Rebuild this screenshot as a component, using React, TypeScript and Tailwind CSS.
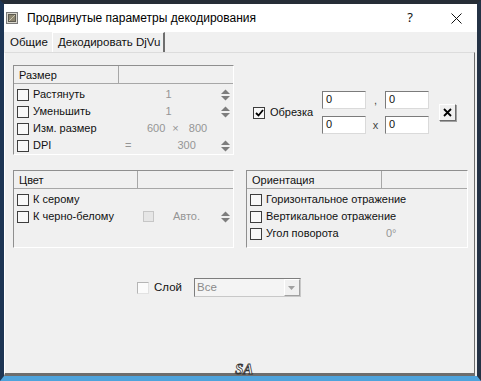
import React from "react";

function Check({ checked = false }: { checked?: boolean }) {
  return (
    <span className="flex items-center justify-center w-[12px] h-[12px] shrink-0 border border-[#3d3d3d] bg-[#f8f8f8]">
      {checked && (
        <svg width="9" height="8" viewBox="0 0 9 8">
          <path d="M1 4 L3.5 6.5 L8 1" stroke="#000" strokeWidth="1.8" fill="none" />
        </svg>
      )}
    </span>
  );
}

function Spin() {
  return (
    <svg width="9" height="12" viewBox="0 0 9 12" className="ml-auto mr-[3px] shrink-0">
      <path d="M0 5 L4.5 0.5 L9 5 Z" fill="#7d7d7d" />
      <path d="M0 7 L4.5 11.5 L9 7 Z" fill="#7d7d7d" />
    </svg>
  );
}

function Label({ cls, children }: { cls: string; children: React.ReactNode }) {
  return (
    <span className={"flex items-center pl-[3px] shrink-0 " + cls}>
      <Check />
      <span className="ml-[4px] whitespace-nowrap">{children}</span>
    </span>
  );
}

function Row({ children }: { children: React.ReactNode }) {
  return <div className="flex items-center h-[17px]">{children}</div>;
}

function Group({
  cls,
  headCls,
  title,
  children,
}: {
  cls: string;
  headCls: string;
  title: string;
  children: React.ReactNode;
}) {
  return (
    <div className={"flex flex-col shrink-0 border border-t-[#8f8f8f] border-l-[#8f8f8f] border-r-white border-b-white " + cls}>
      <div className="flex h-[18px] border-b border-[#a7a7a7] bg-[#f0f0f0]">
        <div className={"pl-[5px] pt-[1px] flex items-center border-r border-[#a7a7a7] shrink-0 " + headCls}>{title}</div>
        <div className="flex-1" />
      </div>
      <div className="pt-[2px] flex flex-col">{children}</div>
    </div>
  );
}

function Field() {
  return (
    <div className="w-[44px] h-[18px] bg-white border border-t-[#7b7b7b] border-l-[#7b7b7b] border-r-[#dadada] border-b-[#dadada] pl-[3px] leading-[15px]">
      0
    </div>
  );
}

export default function App() {
  return (
    <div className="relative w-[481px] h-[381px] overflow-hidden flex flex-col border-t-[4px] border-l-[4px] border-r-[4px] border-b-[5px] border-t-[#262d36] border-l-[#1d3554] border-r-[#243245] border-b-[#4ea3dc] bg-[#f0f0f0] [font-family:'Liberation_Sans',Arial,sans-serif] text-[11px] text-[#111]">
      {/* title bar */}
      <div className="h-[28px] bg-white flex items-center shrink-0">
        <svg width="12" height="12" viewBox="0 0 12 12" className="ml-[2px] shrink-0">
          <rect x="0.5" y="0.5" width="11" height="11" fill="#d9d6cc" stroke="#7a7a7a" />
          <rect x="2.5" y="2.5" width="7" height="7" fill="#8d8670" stroke="#5d5a50" />
          <path d="M3 9 L9 3" stroke="#c9c3ad" strokeWidth="1" />
        </svg>
        <span className="ml-[9px] text-[12px] whitespace-nowrap text-black">
          Продвинутые параметры декодирования
        </span>
        <span className="ml-auto text-[13px] [font-family:'Noto_Sans',sans-serif]">?</span>
        <svg width="11" height="11" viewBox="0 0 11 11" className="ml-[38px] mr-[15px] shrink-0">
          <path d="M0.5 0.5 L10.5 10.5 M10.5 0.5 L0.5 10.5" stroke="#111" strokeWidth="1" />
        </svg>
      </div>

      {/* tabs */}
      <div className="h-[20px] flex items-end shrink-0">
        <div className="ml-[1px] w-[47px] h-[18px] pl-[5px] flex items-center text-[11.5px] whitespace-nowrap">Общие</div>
        <div className="w-[113px] h-[20px] pl-[5px] flex items-center border-t border-l border-r-[2px] border-t-white border-l-white border-r-[#6e6e6e] text-[11.5px] whitespace-nowrap">
          Декодировать DjVu
        </div>
      </div>

      {/* panel */}
      <div className="flex-1 flex pr-[2px]">
        <div className="flex-1 flex flex-col border-t border-l border-r border-b-[3px] border-t-[#dcdcdc] border-l-white border-r-[#6d6d6d] border-b-[#6d6d6d] pl-[8px] pt-[12px]">
          {/* row 1 */}
          <div className="flex items-start">
            <Group cls="w-[221px] h-[90px]" headCls="w-[105px]" title="Размер">
              <Row>
                <Label cls="w-[106px]">Растянуть</Label>
                <span className="w-[97px] text-center text-[#959595]">1</span>
                <Spin />
              </Row>
              <Row>
                <Label cls="w-[106px]">Уменьшить</Label>
                <span className="w-[97px] text-center text-[#959595]">1</span>
                <Spin />
              </Row>
              <Row>
                <Label cls="w-[106px]">Изм. размер</Label>
                <span className="ml-[27px] text-[#959595]">600</span>
                <span className="ml-[7px] text-[#959595]">×</span>
                <span className="ml-[10px] text-[#959595]">800</span>
              </Row>
              <Row>
                <Label cls="w-[106px]">DPI</Label>
                <span className="ml-[5px] text-[#959595]">=</span>
                <span className="ml-[46px] text-[#959595]">300</span>
                <Spin />
              </Row>
            </Group>

            <div className="ml-[19px] mt-[26px] flex items-center">
              <Check checked />
              <span className="ml-[5px]">Обрезка</span>
              <div className="ml-[9px] grid grid-cols-[44px_19px_44px] gap-y-[7px]">
                <Field />
                <span className="text-center leading-[18px] text-[#444]">,</span>
                <Field />
                <Field />
                <span className="text-center leading-[18px] text-[#444]">x</span>
                <Field />
              </div>
              <div className="ml-[10px] w-[17px] h-[17px] flex items-center justify-center bg-[#f0f0f0] border border-t-white border-l-white border-r-[#6d6d6d] border-b-[#6d6d6d] shadow-[1px_1px_0_#a0a0a0]">
                <svg width="9" height="9" viewBox="0 0 9 9">
                  <path d="M1 1 L8 8 M8 1 L1 8" stroke="#000" strokeWidth="1.8" />
                </svg>
              </div>
            </div>
          </div>

          {/* row 2 */}
          <div className="flex mt-[15px] gap-[12px]">
            <Group cls="w-[221px] h-[78px]" headCls="w-[124px]" title="Цвет">
              <Row>
                <Label cls="w-[129px]">К серому</Label>
              </Row>
              <Row>
                <Label cls="w-[129px]">К черно-белому</Label>
                <span className="w-[11px] h-[11px] shrink-0 border border-[#c6c6c6] bg-[#e6e6e6]" />
                <span className="ml-[19px] text-[#959595]">Авто.</span>
                <Spin />
              </Row>
            </Group>
            <Group cls="w-[222px] h-[78px]" headCls="w-[135px]" title="Ориентация">
              <Row>
                <Label cls="w-[139px]">Горизонтальное отражение</Label>
              </Row>
              <Row>
                <Label cls="w-[139px]">Вертикальное отражение</Label>
              </Row>
              <Row>
                <Label cls="w-[139px]">Угол поворота</Label>
                <span className="text-[#959595]">0°</span>
              </Row>
            </Group>
          </div>

          {/* row 3 */}
          <div className="flex items-center mt-[30px] ml-[124px]">
            <span className="w-[12px] h-[12px] shrink-0 border border-t-[#b5b5b5] border-l-[#b5b5b5] border-r-[#e2e2e2] border-b-[#e2e2e2] bg-[#fbfbfb]" />
            <span className="ml-[5px] text-[11.5px]">Слой</span>
            <div className="ml-[12px] w-[107px] h-[19px] flex border border-t-[#7d7d7d] border-l-[#7d7d7d] border-r-[#c8c8c8] border-b-[#c8c8c8] bg-[#f4f4f4]">
              <span className="flex-1 pl-[2px] leading-[17px] text-[11.5px] text-[#8a8a8a]">Все</span>
              <span className="w-[16px] h-[17px] flex items-center justify-center bg-[#f0f0f0] border border-t-white border-l-white border-r-[#a0a0a0] border-b-[#a0a0a0]">
                <svg width="7" height="4" viewBox="0 0 7 4">
                  <path d="M0 0 L7 0 L3.5 4 Z" fill="#a0a0a0" />
                </svg>
              </span>
            </div>
          </div>
        </div>
      </div>

      {/* watermark */}
      <span className="absolute left-[231px] bottom-[-1px] text-[15px] leading-[15px] italic font-bold [font-family:'Liberation_Serif',serif] text-white [-webkit-text-stroke:0.8px_#333]">
        SA
      </span>
    </div>
  );
}
